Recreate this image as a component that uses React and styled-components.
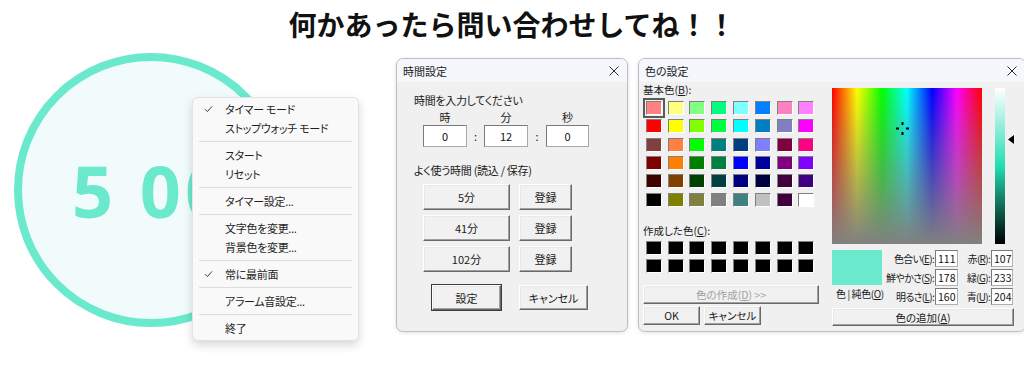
import React from "react";
import styled, { createGlobalStyle } from "styled-components";

const GlobalStyle = createGlobalStyle`
  body {
    margin: 0;
    background: #ffffff;
    font-family: "Noto Sans CJK JP", "Noto Sans", sans-serif;
  }
`;

// basic colour table of the Windows colour picker
const basicColors = [
    ["#ff8080", "#ffff80", "#80ff80", "#00ff80", "#80ffff", "#0080ff", "#ff80c0", "#ff80ff"],
    ["#ff0000", "#ffff00", "#80ff00", "#00ff40", "#00ffff", "#0080c0", "#8080c0", "#ff00ff"],
    ["#804040", "#ff8040", "#00ff00", "#008080", "#004080", "#8080ff", "#800040", "#ff0080"],
    ["#800000", "#ff8000", "#008000", "#008040", "#0000ff", "#0000a0", "#800080", "#8000ff"],
    ["#400000", "#804000", "#004000", "#004040", "#000080", "#000040", "#400040", "#400080"],
    ["#000000", "#808000", "#808040", "#808080", "#408080", "#c0c0c0", "#400040", "#ffffff"],
];

const menuItems = [
    { label: "タイマー モード", checked: true },
    { label: "ストップウォッチ モード" },
    "sep",
    { label: "スタート" },
    { label: "リセット" },
    "sep",
    { label: "タイマー設定..." },
    "sep",
    { label: "文字色を変更..." },
    { label: "背景色を変更..." },
    "sep",
    { label: "常に最前面", checked: true },
    "sep",
    { label: "アラーム音設定..." },
    "sep",
    { label: "終了" },
];

const presets = ["5分", "41分", "102分"];

const CloseIcon = () => (
    <svg width="10" height="10" viewBox="0 0 10 10">
        <path d="M0.5 0.5 L9.5 9.5 M9.5 0.5 L0.5 9.5" stroke="#2b2b2b" strokeWidth="1" fill="none" />
    </svg>
);

const CheckIcon = () => (
    <svg width="9" height="8" viewBox="0 0 9 8">
        <path d="M1 4.2 L3.4 6.6 L8 1.4" stroke="#3a3a3a" strokeWidth="1" fill="none" />
    </svg>
);

const Dialog = ({ title, children, className }) => (
    <DialogFrame className={className}>
        <TitleBar>
            <span>{title}</span>
            <CloseIcon />
        </TitleBar>
        {children}
    </DialogFrame>
);

const App = () => {
    return (
        <Page>
            <GlobalStyle />
            <Title>何かあったら問い合わせしてね！！</Title>
            <Stage>
                <TimerArea>
                    <Circle>5 00</Circle>
                    <Menu>
                        {menuItems.map((item, i) =>
                            item === "sep" ? (
                                <MenuSeparator key={i} />
                            ) : (
                                <MenuItem key={i}>
                                    <CheckSlot>{item.checked && <CheckIcon />}</CheckSlot>
                                    {item.label}
                                </MenuItem>
                            )
                        )}
                    </Menu>
                </TimerArea>

                <TimeDialog title="時間設定">
                    <TimeBody>
                        <Label>時間を入力してください</Label>
                        <TimeFields>
                            <FieldCaption>時</FieldCaption>
                            <span />
                            <FieldCaption>分</FieldCaption>
                            <span />
                            <FieldCaption>秒</FieldCaption>
                            <TimeInput readOnly value="0" />
                            <Colon>:</Colon>
                            <TimeInput readOnly value="12" />
                            <Colon>:</Colon>
                            <TimeInput readOnly value="0" />
                        </TimeFields>
                        <PresetLabel>よく使う時間 (読込 / 保存)</PresetLabel>
                        <PresetGrid>
                            {presets.map((p) => (
                                <React.Fragment key={p}>
                                    <Button>{p}</Button>
                                    <Button>登録</Button>
                                </React.Fragment>
                            ))}
                        </PresetGrid>
                        <FooterRow>
                            <Button $default>設定</Button>
                            <Button>キャンセル</Button>
                        </FooterRow>
                    </TimeBody>
                </TimeDialog>

                <ColorDialog title="色の設定">
                    <ColorBody>
                        <ColorLeft>
                            <SmallLabel>基本色(<u>B</u>):</SmallLabel>
                            <SwatchGrid $rows={6}>
                                {basicColors.flat().map((c, i) => (
                                    <SwatchCell key={i}>
                                        <Swatch $color={c} $selected={i === 0} />
                                    </SwatchCell>
                                ))}
                            </SwatchGrid>
                            <CustomLabel>作成した色(<u>C</u>):</CustomLabel>
                            <SwatchGrid $rows={2} $rowHeight={18}>
                                {Array.from({ length: 16 }).map((_, i) => (
                                    <SwatchCell key={i}>
                                        <Swatch $color="#000000" />
                                    </SwatchCell>
                                ))}
                            </SwatchGrid>
                            <WideButton disabled>色の作成(<u>D</u>) &gt;&gt;</WideButton>
                            <SmallButtonRow>
                                <SmallButton>OK</SmallButton>
                                <SmallButton>キャンセル</SmallButton>
                            </SmallButtonRow>
                        </ColorLeft>

                        <ColorRight>
                            <PickerRow>
                                <Spectrum>
                                    <Crosshair width="13" height="13" viewBox="0 0 13 13">
                                        <path d="M5.5 0 h2 v3 h-2z M5.5 10 h2 v3 h-2z M0 5.5 h3 v2 h-3z M10 5.5 h3 v2 h-3z" fill="#000" />
                                    </Crosshair>
                                </Spectrum>
                                <LumBar>
                                    <LumArrow width="6" height="9" viewBox="0 0 6 9">
                                        <path d="M0 4.5 L6 0 L6 9 Z" fill="#000" />
                                    </LumArrow>
                                </LumBar>
                            </PickerRow>
                            <ValueRow>
                                <PreviewColumn>
                                    <Preview $color="#6be9cc" />
                                    <PreviewCaption>色 | 純色(<u>O</u>)</PreviewCaption>
                                </PreviewColumn>
                                <ValueGrid>
                                    <ValueLabel>色合い(<u>E</u>):</ValueLabel>
                                    <ValueInput readOnly value="111" />
                                    <ValueLabel>赤(<u>R</u>):</ValueLabel>
                                    <ValueInput readOnly value="107" />
                                    <ValueLabel>鮮やかさ(<u>S</u>):</ValueLabel>
                                    <ValueInput readOnly value="178" />
                                    <ValueLabel>緑(<u>G</u>):</ValueLabel>
                                    <ValueInput readOnly value="233" />
                                    <ValueLabel>明るさ(<u>L</u>):</ValueLabel>
                                    <ValueInput readOnly value="160" />
                                    <ValueLabel>青(<u>U</u>):</ValueLabel>
                                    <ValueInput readOnly value="204" />
                                </ValueGrid>
                            </ValueRow>
                            <AddButton>色の追加(<u>A</u>)</AddButton>
                        </ColorRight>
                    </ColorBody>
                </ColorDialog>
            </Stage>
        </Page>
    );
};

export default App;

const Page = styled.div`
    width: 1024px;
    height: 385px;
    overflow: hidden;
    position: relative;
    font-feature-settings: "palt";
`;

const Title = styled.h1`
    margin: 0;
    height: 49px;
    line-height: 49px;
    text-align: center;
    font-size: 28px;
    font-weight: 700;
    color: #111111;
    font-feature-settings: normal;
`;

const Stage = styled.div`
    display: flex;
    align-items: flex-start;
    margin-top: 4px;
`;

// --- timer + context menu ---

const TimerArea = styled.div`
    position: relative;
    flex: none;
    width: 396px;
    padding-left: 14px;
    box-sizing: border-box;
`;

const Circle = styled.div`
    width: 274px;
    height: 274px;
    box-sizing: border-box;
    border-radius: 50%;
    border: 8px solid #6be9cc;
    background: #f2fbfc;
    display: flex;
    align-items: center;
    justify-content: center;
    color: #6be9cc;
    font-family: "Open Sans", "DejaVu Sans", sans-serif;
    font-weight: 700;
    font-size: 72px;
    letter-spacing: 4px;
    white-space: pre;
`;

const Menu = styled.div`
    position: absolute;
    left: 192px;
    top: 44px;
    width: 167px;
    padding: 1px 0 3px;
    box-sizing: border-box;
    background: #f9f9f9;
    border: 1px solid #e3e3e3;
    border-radius: 6px;
    box-shadow: 0 4px 10px rgba(0, 0, 0, 0.16);
`;

const MenuItem = styled.div`
    height: 19px;
    display: flex;
    align-items: center;
    font-size: 11px;
    color: #1f1f1f;
    letter-spacing: -0.3px;
`;

const CheckSlot = styled.span`
    width: 32px;
    padding-left: 11px;
    box-sizing: border-box;
    display: flex;
    align-items: center;
`;

const MenuSeparator = styled.div`
    height: 8px;
    display: flex;
    align-items: center;
    margin: 0 6px 0 6px;

    &::after {
        content: "";
        flex: 1;
        height: 1px;
        background: #dcdcdc;
    }
`;

// --- dialogs ---

const DialogFrame = styled.div`
    flex: none;
    margin-top: 5px;
    height: 274px;
    box-sizing: border-box;
    border: 1px solid #bfbfbf;
    border-radius: 7px;
    background: #f0f0f0;
    overflow: hidden;
    box-shadow: 0 1px 4px rgba(0, 0, 0, 0.12);
    display: flex;
    flex-direction: column;
    font-size: 11px;
    color: #1a1a1a;
`;

const TitleBar = styled.div`
    height: 23px;
    flex: none;
    display: flex;
    align-items: center;
    justify-content: space-between;
    padding: 0 8px 0 6px;
    background: #f4f7fb;
    font-size: 11px;
`;

const TimeDialog = styled(Dialog)`
    width: 232px;
`;

const ColorDialog = styled(Dialog)`
    width: 388px;
    margin-left: 10px;
`;

const TimeBody = styled.div`
    padding: 10px 0 0 17px;
`;

const Label = styled.div`
    height: 16px;
    line-height: 16px;
    letter-spacing: -0.3px;
`;

const TimeFields = styled.div`
    display: grid;
    grid-template-columns: 44px 17px 44px 18px 43px;
    grid-template-rows: 16px 22px;
    margin: 1px 0 0 9px;
`;

const FieldCaption = styled.span`
    text-align: center;
    line-height: 16px;
`;

const Colon = styled.span`
    text-align: center;
    line-height: 22px;
`;

const TimeInput = styled.input`
    width: 100%;
    height: 22px;
    box-sizing: border-box;
    margin: 0;
    padding: 0;
    border: 1px solid #7a7a7a;
    border-right-color: #a8a8a8;
    border-bottom-color: #a8a8a8;
    background: #ffffff;
    text-align: center;
    font: inherit;
    font-size: 11px;
    color: #111;
    outline: none;
`;

const PresetLabel = styled(Label)`
    margin-top: 15px;
`;

const PresetGrid = styled.div`
    display: grid;
    grid-template-columns: 87px 53px;
    grid-auto-rows: 26px;
    column-gap: 9px;
    row-gap: 5px;
    margin: 6px 0 0 9px;
`;

const Button = styled.button`
    box-sizing: border-box;
    margin: 0;
    padding: 0;
    font: inherit;
    font-size: 11px;
    color: #1a1a1a;
    background: #f1f1f1;
    border: 1px solid;
    border-color: #ffffff #696969 #696969 #ffffff;
    box-shadow: inset -1px -1px 0 #a0a0a0, inset 1px 1px 0 #e8e8e8;
    outline: ${(p) => (p.$default ? "1px solid #3c3c3c" : "none")};
`;

const FooterRow = styled.div`
    display: grid;
    grid-template-columns: 69px 69px;
    grid-template-rows: 25px;
    column-gap: 18px;
    margin: 13px 0 0 18px;
`;

// --- colour dialog ---

const ColorBody = styled.div`
    display: flex;
    padding: 1px 0 0 4px;
`;

const ColorLeft = styled.div`
    width: 189px;
    flex: none;
`;

const SmallLabel = styled.div`
    height: 14px;
    line-height: 14px;
    font-size: 10.5px;

    u {
        text-underline-offset: 1px;
    }
`;

const CustomLabel = styled(SmallLabel)`
    margin-top: 15px;
`;

const SwatchGrid = styled.div`
    display: grid;
    grid-template-columns: repeat(8, 21.8px);
    grid-template-rows: repeat(${(p) => p.$rows}, ${(p) => p.$rowHeight || 18.3}px);
    margin-top: ${(p) => (p.$rows === 6 ? 2 : 1)}px;
`;

const SwatchCell = styled.div`
    display: flex;
    align-items: center;
    justify-content: center;
`;

const Swatch = styled.span`
    width: 16px;
    height: 14px;
    box-sizing: border-box;
    background: ${(p) => p.$color};
    border: 1px solid;
    border-color: #808080 #ffffff #ffffff #808080;
    outline: ${(p) => (p.$selected ? "2px solid #5a5a5a" : "none")};
    outline-offset: 1px;
`;

const WideButton = styled(Button)`
    display: block;
    width: 176px;
    height: 19px;
    margin-top: 10px;
    color: #a0a0a0;
    font-size: 10.5px;
`;

const SmallButtonRow = styled.div`
    display: flex;
    gap: 4px;
    margin-top: 2px;
`;

const SmallButton = styled(Button)`
    width: 57px;
    height: 19px;
    font-size: 10.5px;
`;

const ColorRight = styled.div`
    flex: none;
    width: 183px;
    padding-top: 5px;
`;

const PickerRow = styled.div`
    display: flex;
    align-items: flex-start;
`;

const Spectrum = styled.div`
    position: relative;
    width: 150px;
    height: 156px;
    background:
        linear-gradient(to bottom, rgba(128, 128, 128, 0), #808080),
        linear-gradient(to right, #ff0000, #ffff00 16.7%, #00ff00 33.3%, #00ffff 50%, #0000ff 66.7%, #ff00ff 83.3%, #ff0000);
`;

const Crosshair = styled.svg`
    position: absolute;
    left: 64px;
    top: 34px;
`;

const LumBar = styled.div`
    position: relative;
    width: 10px;
    height: 156px;
    margin-left: 13px;
    background: linear-gradient(to bottom, #ffffff, hsl(166, 74%, 50%) 50%, #000000);
`;

const LumArrow = styled.svg`
    position: absolute;
    left: 13px;
    top: 47px;
`;

const ValueRow = styled.div`
    display: flex;
    margin-top: 5px;
`;

const PreviewColumn = styled.div`
    width: 51px;
    flex: none;
`;

const Preview = styled.div`
    width: 50px;
    height: 35px;
    margin-top: 1px;
    background: ${(p) => p.$color};
`;

const PreviewCaption = styled.div`
    margin-top: 2px;
    padding-left: 4px;
    font-size: 10px;
    letter-spacing: -0.4px;
    line-height: 14px;
    white-space: nowrap;
`;

const ValueGrid = styled.div`
    display: grid;
    grid-template-columns: 52px 23px 33px 22px;
    grid-auto-rows: 19px;
    align-items: center;
`;

const ValueLabel = styled.span`
    text-align: right;
    padding-right: 1px;
    font-size: 10px;
    letter-spacing: -0.7px;
    white-space: nowrap;
`;

const ValueInput = styled.input`
    width: 100%;
    height: 17px;
    box-sizing: border-box;
    margin: 0;
    padding: 0 0 0 2px;
    border: 1px solid #7a7a7a;
    border-right-color: #b0b0b0;
    border-bottom-color: #b0b0b0;
    background: #ffffff;
    font: inherit;
    font-size: 10.5px;
    color: #111;
    outline: none;
`;

const AddButton = styled(Button)`
    display: block;
    width: 182px;
    height: 18px;
    margin-top: 2px;
    font-size: 10.5px;
`;
